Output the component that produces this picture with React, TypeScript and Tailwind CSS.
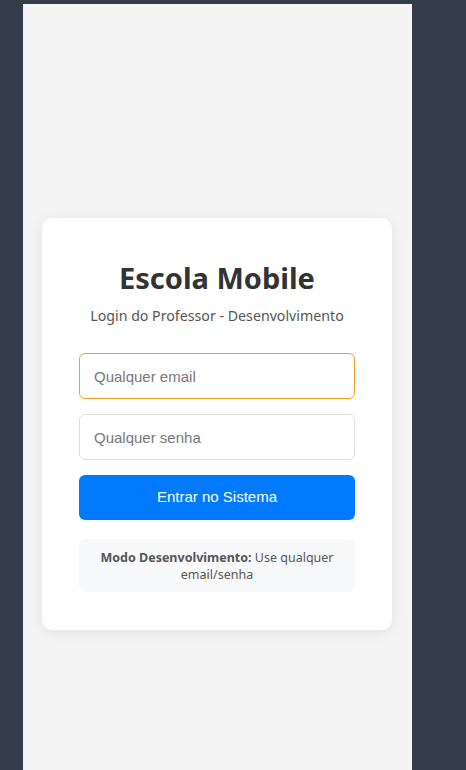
import React from 'react'

const App = () => {
  return (
    <div className="h-[770px] overflow-hidden bg-[#343c4c] pl-[23px] pt-[4px]">
      <div className="flex h-[840px] w-[389px] items-center bg-[#f4f4f4] px-[19px]">
        <div className="w-[350px] rounded-[10px] bg-white px-[37px] pt-[42px] pb-[38px] shadow-[0_2px_14px_rgba(0,0,0,0.08)]">
          <h1 className="text-center font-['Noto_Sans',sans-serif] text-[29px] font-bold leading-[35px] text-[#333]">
            Escola Mobile
          </h1>
          <p className="mt-[11px] text-center font-['Noto_Sans',sans-serif] text-[14.2px] leading-[20px] text-[#555]">
            Login do Professor - Desenvolvimento
          </p>
          <div className="mt-[27px] flex flex-col gap-[15px]">
            <input
              placeholder="Qualquer email"
              className="h-[46px] w-full rounded-[6px] border border-[#f0a01e] px-[14px] font-['Liberation_Sans',sans-serif] text-[15px] text-[#333] outline-none placeholder:text-[#777]"
            />
            <input
              placeholder="Qualquer senha"
              type="password"
              className="h-[46px] w-full rounded-[6px] border border-[#ddd] px-[14px] font-['Liberation_Sans',sans-serif] text-[15px] text-[#333] outline-none placeholder:text-[#777]"
            />
            <button className="h-[45px] w-full rounded-[6px] bg-[#007bff] font-['Liberation_Sans',sans-serif] text-[15px] text-white">
              Entrar no Sistema
            </button>
          </div>
          <div className="mt-[19px] rounded-[6px] bg-[#f8f9fa] px-[14px] pt-[10px] pb-[9px] text-center font-['Noto_Sans',sans-serif] text-[12.5px] leading-[17px] text-[#555]">
            <strong className="font-bold">Modo Desenvolvimento:</strong> Use qualquer email/senha
          </div>
        </div>
      </div>
    </div>
  )
}

export default App
